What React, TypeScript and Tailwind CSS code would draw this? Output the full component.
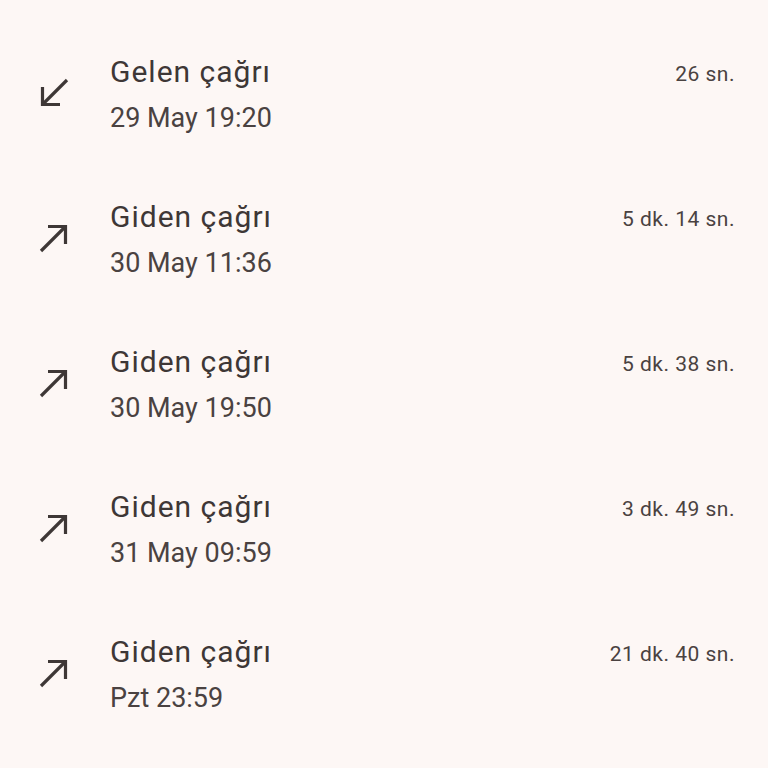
import React from 'react';

type Call = { incoming: boolean; date: string; duration: string };

const calls: Call[] = [
  { incoming: true, date: '29 May 19:20', duration: '26 sn.' },
  { incoming: false, date: '30 May 11:36', duration: '5 dk. 14 sn.' },
  { incoming: false, date: '30 May 19:50', duration: '5 dk. 38 sn.' },
  { incoming: false, date: '31 May 09:59', duration: '3 dk. 49 sn.' },
  { incoming: false, date: 'Pzt 23:59', duration: '21 dk. 40 sn.' },
];

function ArrowIcon({ incoming }: { incoming: boolean }) {
  return (
    <svg width="30" height="30" viewBox="0 0 30 30" fill="none" stroke="#3e3736" strokeWidth="3.2">
      {incoming ? (
        <>
          <line x1="28" y1="2" x2="4" y2="26" />
          <polyline points="3.5,9 3.5,26.5 21,26.5" />
        </>
      ) : (
        <>
          <line x1="2" y1="28" x2="26" y2="4" />
          <polyline points="9,3.5 26.5,3.5 26.5,21" />
        </>
      )}
    </svg>
  );
}

export default function App() {
  return (
    <div
      className="w-[768px] h-[768px] bg-[#fdf7f5] pt-[24px] overflow-hidden"
      style={{ fontFamily: 'Roboto, "Open Sans", sans-serif' }}
    >
      {calls.map((c, i) => (
        <div key={i} className="h-[145px] flex items-center pl-[39px] pr-[33px]">
          <div className="w-[71px] -mt-[7px] flex">
            <ArrowIcon incoming={c.incoming} />
          </div>
          <div className="flex-1 flex flex-col gap-[10px]">
            <div className="flex items-center justify-between h-[36px] -mt-[3px]">
              <span className="text-[30px] leading-[36px] tracking-[1px] text-[#3e3736]">
                {c.incoming ? 'Gelen çağrı' : 'Giden çağrı'}
              </span>
              <span className="text-[21px] leading-[36px] tracking-[0.5px] text-[#4a4241] mt-[4px]">
                {c.duration}
              </span>
            </div>
            <span className="text-[27px] leading-[36px] text-[#4a4241]">{c.date}</span>
          </div>
        </div>
      ))}
    </div>
  );
}
